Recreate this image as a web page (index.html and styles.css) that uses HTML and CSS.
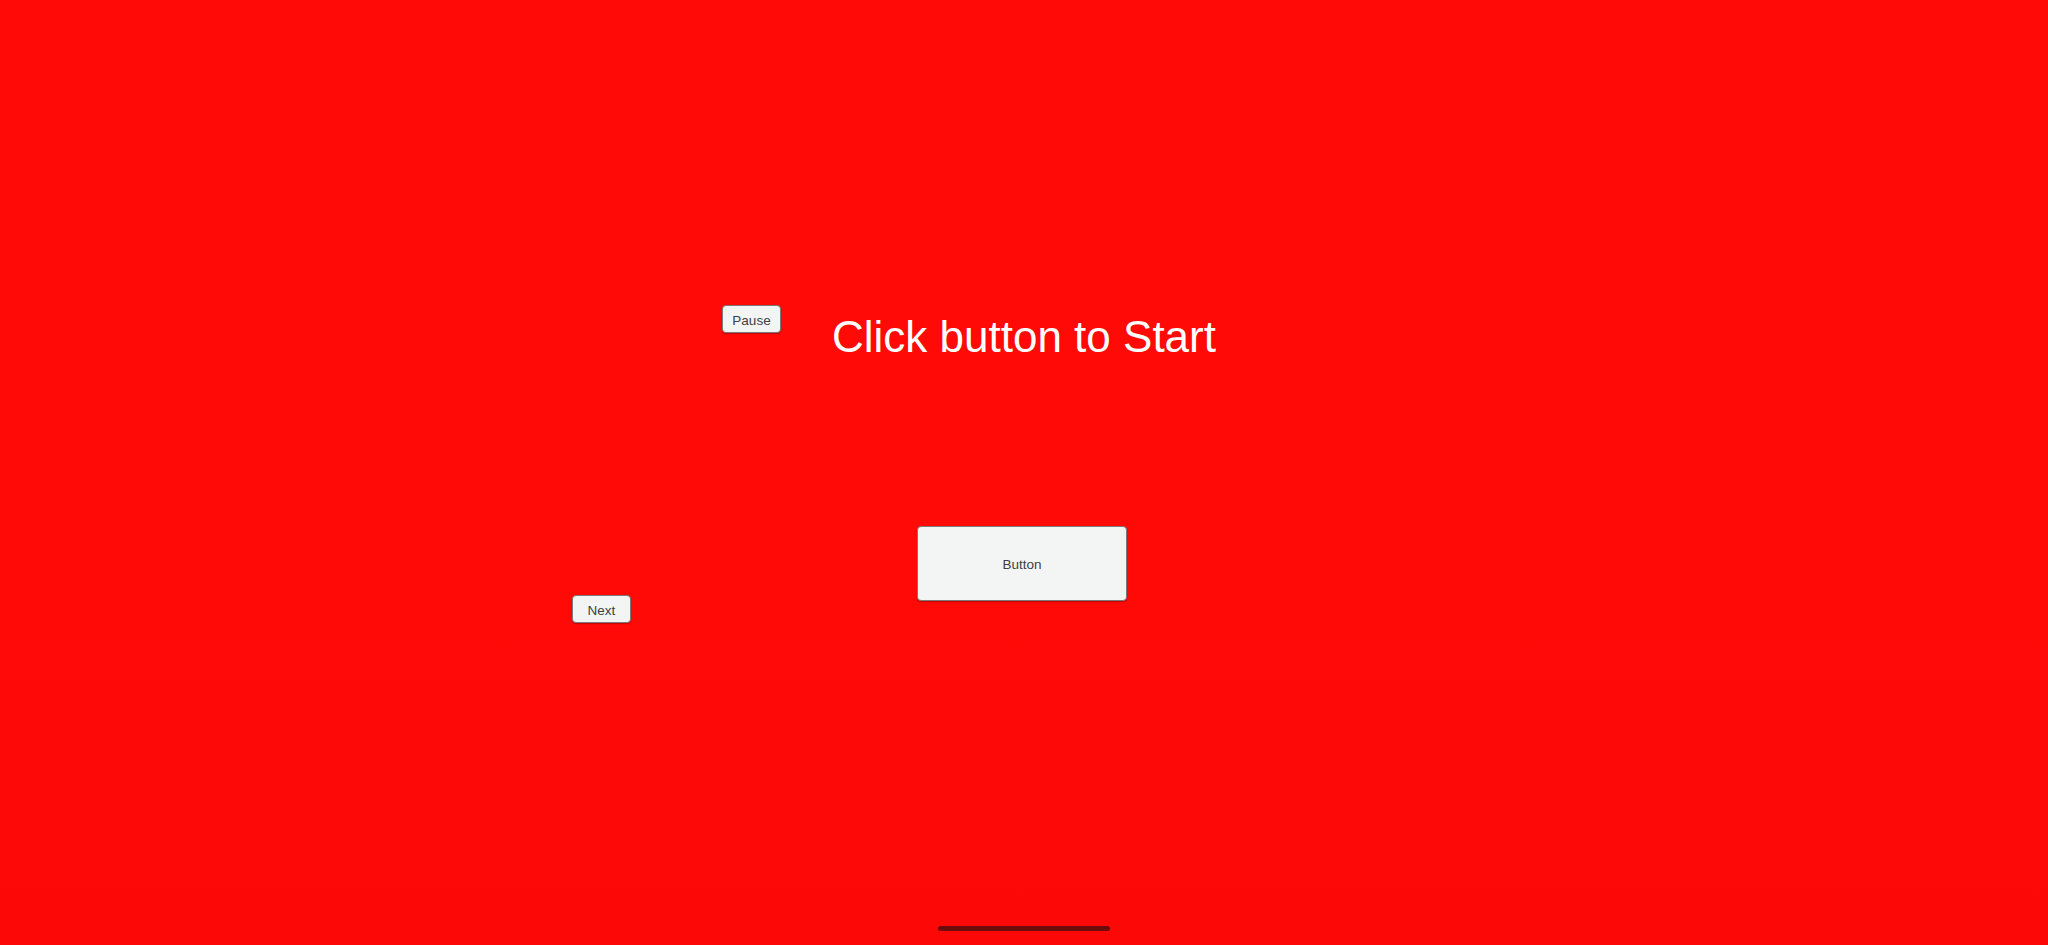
FILE: index.html
```html
<!DOCTYPE html>
<html>
<head>
<meta charset="utf-8">
<link rel="stylesheet" href="styles.css">
</head>
<body>
<div class="stage">
  <button class="btn btn-small pause">Pause</button>
  <h1 class="title">Click button to Start</h1>
  <button class="btn btn-main">Button</button>
  <button class="btn btn-small next">Next</button>
  <div class="home-indicator"></div>
</div>
</body>
</html>
```
FILE: styles.css
```css
html, body {
  margin: 0;
  padding: 0;
  width: 2048px;
  height: 945px;
  overflow: hidden;
}
body {
  background: #ff0a07;
  font-family: "Liberation Sans", Arial, sans-serif;
}
.stage {
  position: relative;
  width: 2048px;
  height: 945px;
  background: linear-gradient(180deg, #ff0a07 0%, #ff0a07 60%, #fc0907 100%);
}
.title {
  position: absolute;
  left: 0;
  right: 0;
  top: 309px;
  margin: 0;
  text-align: center;
  color: #ffffff;
  font-weight: normal;
  font-size: 44px;
  line-height: 56px;
}
.btn {
  position: absolute;
  margin: 0;
  padding: 2px 0 0 0;
  background: #f3f5f5;
  border: 1px solid #7a7a7a;
  border-radius: 4px;
  color: #404040;
  font-family: "Liberation Sans", Arial, sans-serif;
  box-shadow: 0 1px 1px rgba(0,0,0,0.25);
}
.btn-small {
  width: 59px;
  height: 28px;
  font-size: 13.5px;
}
.pause { left: 722px; top: 305px; }
.next { left: 572px; top: 595px; }
.btn-main {
  left: 917px;
  top: 526px;
  width: 210px;
  height: 75px;
  font-size: 13.5px;
}
.home-indicator {
  position: absolute;
  left: 938px;
  top: 926px;
  width: 172px;
  height: 5px;
  border-radius: 3px;
  background: #6e0b0b;
}
```
